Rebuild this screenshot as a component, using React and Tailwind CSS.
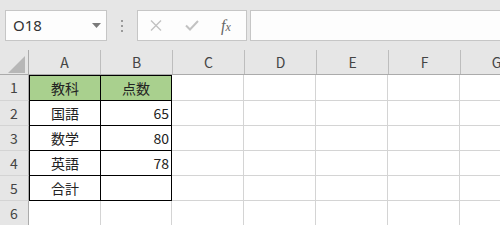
const cols = ['A', 'B', 'C', 'D', 'E', 'F', 'G'];

const rows = [
  { n: 1, a: '教科', b: '点数', head: true },
  { n: 2, a: '国語', b: '65' },
  { n: 3, a: '数学', b: '80' },
  { n: 4, a: '英語', b: '78' },
  { n: 5, a: '合計', b: '' },
  { n: 6 },
];

function TopBar() {
  return (
    <div className="flex h-[50px] items-start pt-[10px] pl-[5px]">
      <div className="flex h-[31px] w-[102px] items-center justify-between border border-[#c6c6c6] bg-[#fdfdfd] pl-[7px] pr-[5px]">
        <span className="text-[15px] text-[#333] font-['Noto_Sans',sans-serif] leading-none">O18</span>
        <svg width="9" height="5" viewBox="0 0 9 5">
          <path d="M0 0 L9 0 L4.5 5 Z" fill="#7a7a7a" />
        </svg>
      </div>
      <div className="flex h-[31px] w-[30px] flex-col items-center justify-center gap-[3px]">
        <span className="h-[2px] w-[2px] bg-[#9a9a9a]" />
        <span className="h-[2px] w-[2px] bg-[#9a9a9a]" />
        <span className="h-[2px] w-[2px] bg-[#9a9a9a]" />
      </div>
      <div className="flex h-[31px] w-[110px] items-center border border-[#c6c6c6] bg-[#fdfdfd]">
        <svg className="ml-[12px]" width="12" height="11" viewBox="0 0 12 11">
          <path d="M1 0.5 L11 10.5 M11 0.5 L1 10.5" stroke="#c2c2c2" strokeWidth="1.4" />
        </svg>
        <svg className="ml-[23px]" width="14" height="11" viewBox="0 0 14 11">
          <path d="M1 5.5 L5 9.5 L13 1" stroke="#c2c2c2" strokeWidth="2" fill="none" />
        </svg>
        <span className="ml-[22px] text-[16px] italic text-[#666] font-['Liberation_Serif',serif] leading-none">
          f<span className="text-[12px]">x</span>
        </span>
      </div>
      <div className="ml-[3px] h-[31px] flex-1 border border-r-0 border-[#c6c6c6] bg-[#fdfdfd]" />
    </div>
  );
}

function HeaderRow() {
  return (
    <div className="flex h-[25px] bg-[#e6e6e6] border-b border-[#ababab]">
      <div className="relative w-[29px] shrink-0 border-r border-[#ababab]">
        <svg className="absolute left-[8px] top-[6px]" width="17" height="17" viewBox="0 0 17 17">
          <path d="M17 0 L17 17 L0 17 Z" fill="#b7b7b7" />
        </svg>
      </div>
      {cols.map((c) => (
        <div
          key={c}
          className="flex w-[72px] shrink-0 items-center justify-center border-r border-[#bdbdbd] text-[14px] text-[#444]"
        >
          {c}
        </div>
      ))}
    </div>
  );
}

function Row({ r }) {
  const inTable = r.n <= 5;
  const h = r.n === 1 ? 'h-[26px]' : 'h-[25px]';
  return (
    <div className={`flex ${h}`}>
      <div className="flex w-[29px] shrink-0 items-center justify-center border-r border-b border-r-[#ababab] border-b-[#d4d4d4] bg-[#e6e6e6] text-[14px] text-[#444]">
        {r.n}
      </div>
      {inTable ? (
        <>
          <div
            className={`flex w-[72px] shrink-0 items-center justify-center border-l border-r border-b border-black text-[14px] text-[#222] ${
              r.head ? 'border-t bg-[#a9d08e]' : 'bg-white'
            }`}
          >
            {r.a}
          </div>
          <div
            className={`flex w-[71px] shrink-0 items-center border-r border-b border-black text-[14px] text-[#222] ${
              r.head ? 'justify-center border-t bg-[#a9d08e]' : 'justify-end pr-[2px] bg-white'
            }`}
          >
            {r.b}
          </div>
        </>
      ) : (
        <>
          <div className="w-[72px] shrink-0 border-r border-b border-[#d4d4d4] bg-white" />
          <div className="w-[71px] shrink-0 border-r border-b border-[#d4d4d4] bg-white" />
        </>
      )}
      {cols.slice(2).map((c) => (
        <div key={c} className="w-[72px] shrink-0 border-r border-b border-[#d4d4d4] bg-white" />
      ))}
    </div>
  );
}

export default function App() {
  return (
    <div className="h-[225px] w-[500px] overflow-hidden bg-[#e6e6e6] font-['Noto_Sans_CJK_JP',sans-serif]">
      <TopBar />
      <HeaderRow />
      {rows.map((r) => (
        <Row key={r.n} r={r} />
      ))}
    </div>
  );
}
